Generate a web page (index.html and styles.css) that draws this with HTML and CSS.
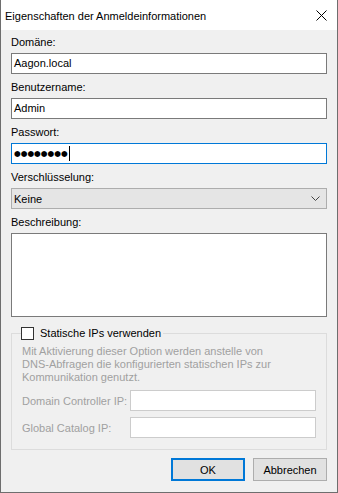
FILE: index.html
```
<!DOCTYPE html>
<html>
	<head>
		<meta charset=utf-8>
		<title>Eigenschaften der Anmeldeinformationen</title>
		<link rel="stylesheet" href="styles.css">
	</head>
	<body>
		<div class="window">
			<div class="titlebar">
				<span class="title">Eigenschaften der Anmeldeinformationen</span>
				<svg class="close" width="11" height="11" viewBox="0 0 11 11">
					<path d="M0.5 0.5 L10.5 10.5 M10.5 0.5 L0.5 10.5" stroke="#000" stroke-width="1"/>
				</svg>
			</div>
			<div class="content">
				<div class="field">
					<label>Domäne:</label>
					<div class="input">Aagon.local</div>
				</div>
				<div class="field">
					<label>Benutzername:</label>
					<div class="input">Admin</div>
				</div>
				<div class="field">
					<label>Passwort:</label>
					<div class="input focused"><span class="dots">●●●●●●●●</span><span class="caret"></span></div>
				</div>
				<div class="field">
					<label>Verschlüsselung:</label>
					<div class="combo">
						<span>Keine</span>
						<svg width="9" height="5" viewBox="0 0 9 5">
							<path d="M0.5 0.5 L4.5 4.5 L8.5 0.5" stroke="#444" stroke-width="1" fill="none"/>
						</svg>
					</div>
				</div>
				<div class="field">
					<label>Beschreibung:</label>
					<div class="textarea"></div>
				</div>
				<fieldset class="group">
					<legend><span class="checkbox"></span>Statische IPs verwenden</legend>
					<p class="hint">Mit Aktivierung dieser Option werden anstelle von<br>DNS-Abfragen die konfigurierten statischen IPs zur<br>Kommunikation genutzt.</p>
					<div class="ip-row">
						<span class="ip-label">Domain Controller IP:</span>
						<div class="input disabled"></div>
					</div>
					<div class="ip-row">
						<span class="ip-label">Global Catalog IP:</span>
						<div class="input disabled"></div>
					</div>
				</fieldset>
				<div class="buttons">
					<button class="btn default">OK</button>
					<button class="btn">Abbrechen</button>
				</div>
			</div>
		</div>
	</body>
</html>
```
FILE: styles.css
```
body { margin: 0; padding: 0; background: #fff; }
.window {
	width: 338px; height: 493px;
	box-sizing: border-box;
	border: 1px solid #6e6e6e;
	border-top: none;
	background: #f0f0f0;
	font-family: 'Liberation Sans', Arial, sans-serif;
	font-size: 11px;
	color: #000;
	display: flex;
	flex-direction: column;
}
.titlebar {
	height: 30px;
	background: #fff;
	display: flex;
	align-items: center;
	justify-content: space-between;
	padding: 0 10px 0 4px;
}
.title { font-size: 11px; padding-top: 1px; }
.close { margin-top: 1px; }

.content {
	padding: 5px 10px 0 10px;
	display: flex;
	flex-direction: column;
}
.field { display: flex; flex-direction: column; margin-bottom: 6px; }
.field label { line-height: 15px; margin-bottom: 3px; }

.input {
	height: 21px;
	box-sizing: border-box;
	border: 1px solid #7a7a7a;
	background: #fff;
	padding: 0 2px;
	line-height: 19px;
	display: flex;
	align-items: center;
}
.input.focused { border-color: #0078d7; }
.dots { font-size: 7.7px; letter-spacing: 0; font-family: 'DejaVu Sans', sans-serif; }
.caret { width: 1px; height: 15px; background: #000; margin-left: 1px; }
.input.disabled { border-color: #cccccc; flex: 1; }

.combo {
	height: 21px;
	box-sizing: border-box;
	border: 1px solid #adadad;
	background: #e5e5e5;
	padding: 0 6px 0 2px;
	display: flex;
	align-items: center;
	justify-content: space-between;
}
.textarea {
	height: 84px;
	box-sizing: border-box;
	border: 1px solid #7a7a7a;
	background: #fff;
}

.group {
	margin: 3px 0 0 0;
	padding: 0 10px 11px 10px;
	border: 1px solid #dcdcdc;
	min-width: 0;
}
.group legend {
	padding: 0 2px 0 0;
	margin-left: -1px;
	line-height: 15px;
	display: flex;
	align-items: center;
}
.checkbox {
	width: 13px; height: 13px;
	box-sizing: border-box;
	border: 1px solid #333;
	background: #fff;
	margin-right: 6px;
}
.hint {
	margin: 4px 0 6px 0;
	line-height: 13px;
	color: #a0a0a0;
	white-space: nowrap;
}
.ip-row { display: flex; align-items: center; margin-bottom: 6px; }
.ip-row:last-child { margin-bottom: 0; }
.ip-label { width: 108px; color: #a0a0a0; white-space: nowrap; }

.buttons {
	display: flex;
	justify-content: flex-end;
	gap: 8px;
	margin-top: 8px;
}
.btn {
	width: 74px; height: 23px;
	box-sizing: border-box;
	border: 1px solid #adadad;
	background: #e1e1e1;
	font-family: inherit;
	font-size: 11px;
	color: #000;
	padding: 0;
}
.btn.default { border: 2px solid #0078d7; }
```
